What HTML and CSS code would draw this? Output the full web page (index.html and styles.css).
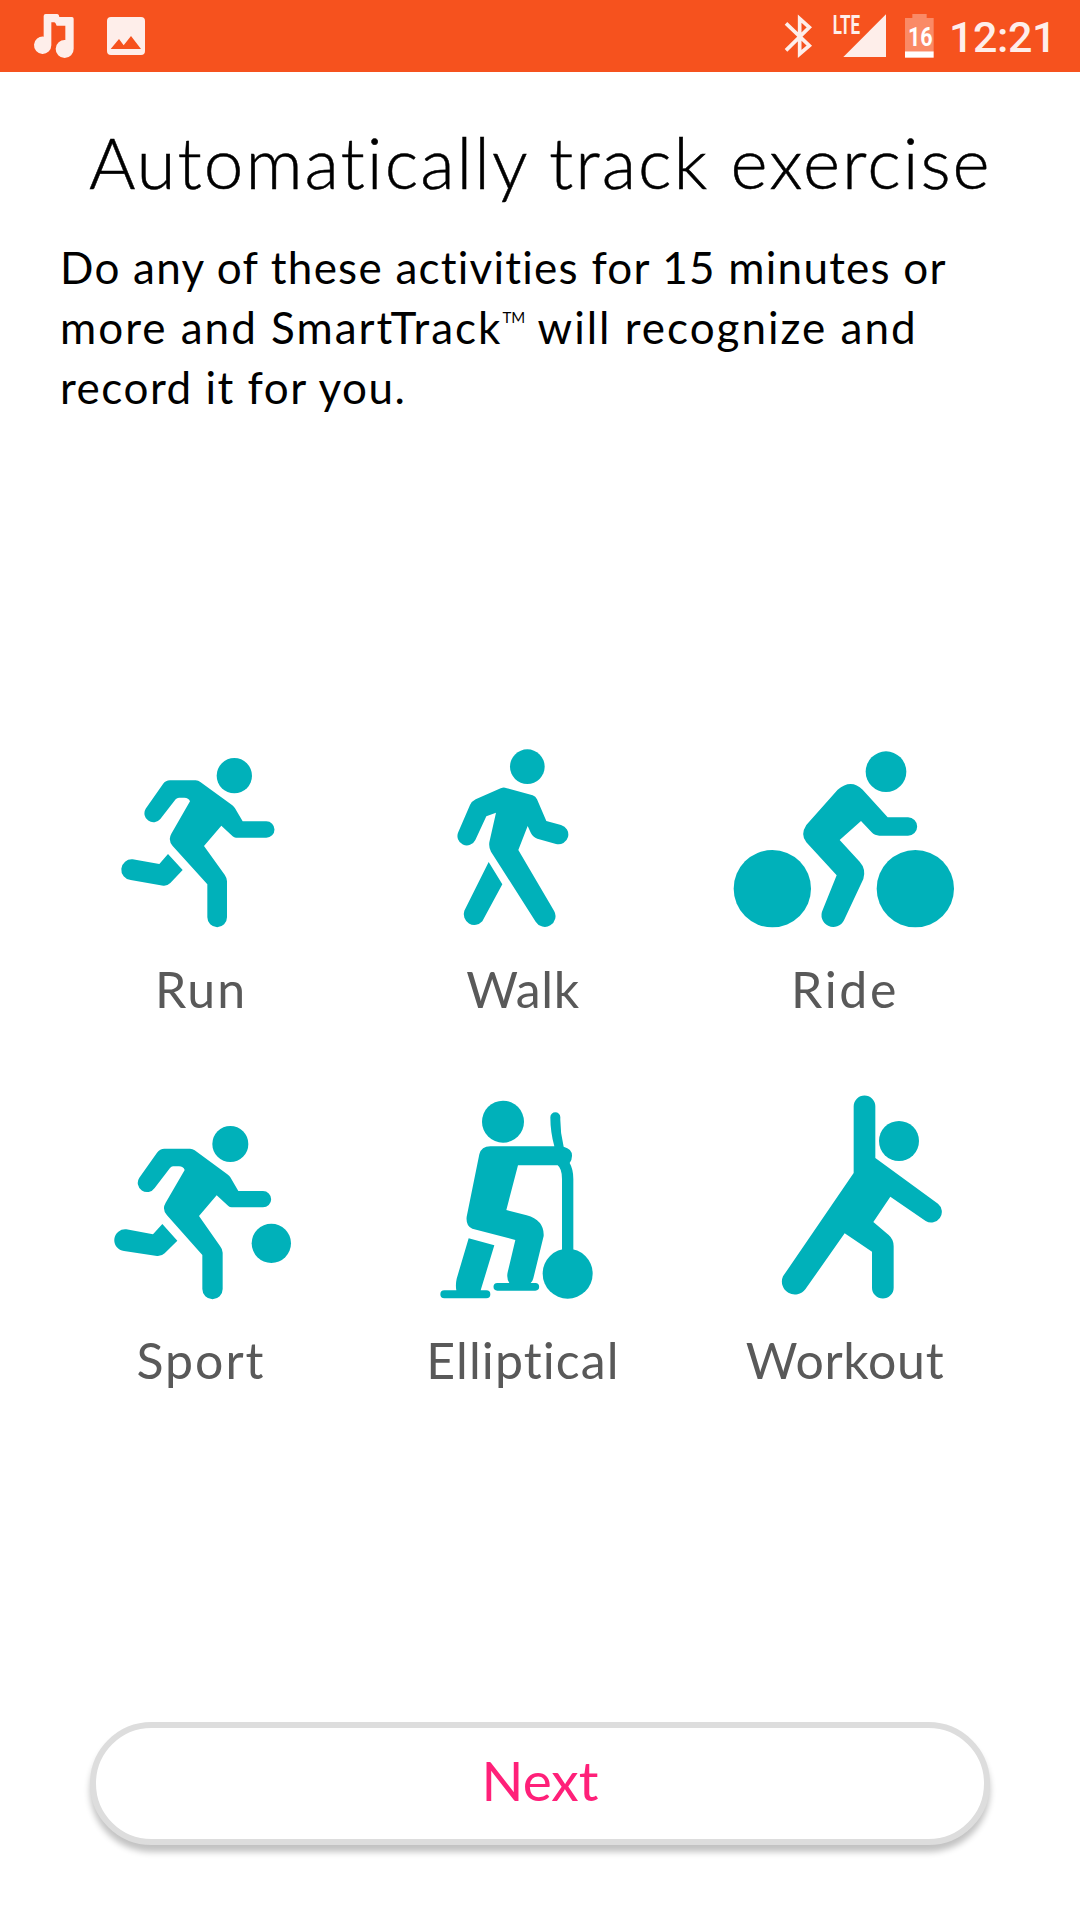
FILE: index.html
```html
<!DOCTYPE html>
<html lang="en">
<head>
<meta charset="utf-8">
<title>Automatically track exercise</title>
<link rel="stylesheet" href="styles.css">
</head>
<body>
<div class="screen">
  <header class="status-bar">
    <div class="status-left">
      <svg class="status-icon" width="200" height="72" viewBox="0 0 600 216">
        <path fill="#feeeea" d="M137 42h35q5 0 6 9h38q5 0 5 5v90a27 27 0 1 1-25-26V77h-26q-4-10-7-10h-9v69a26 26 0 1 1-23-26V48q0-6 6-6z"/>
        <path fill="#feeeea" fill-rule="evenodd" d="M333 51h90q12 0 12 12v90q0 12-12 12h-90q-12 0-12-12V63q0-12 12-12zM332 147h91l-30-39-22 28-14-19z"/>
      </svg>
    </div>
    <div class="status-right">
      <svg class="status-icon" width="180" height="72" viewBox="0 0 540 216">
        <path fill="none" stroke="#feeeea" stroke-width="11" d="M78 70l70 67-29 25V56l29 26-70 69"/>
        <text class="network" x="218" y="101" textLength="82" lengthAdjust="spacingAndGlyphs">LTE</text>
        <path fill="#feeeea" d="M378 43v128H250z"/>
        <path fill="#fa8a66" d="M457 42h43v12h21v100h-86V54h22z"/>
        <path fill="#fff" d="M435 154h86v19h-86z"/>
        <text class="battery-level" x="444" y="138" textLength="74" lengthAdjust="spacingAndGlyphs">16</text>
      </svg>
      <span class="clock">12:21</span>
    </div>
  </header>

  <main class="content">
    <h1 class="title">Automatically track exercise</h1>
    <p class="description">
      <span class="line line-1">Do any of these activities for 15 minutes or</span>
      <span class="line line-2">more and SmartTrack<span class="tm">TM</span> will recognize and</span>
      <span class="line line-3">record it for you.</span>
    </p>

    <section class="activities">
      <div class="activity">
        <svg class="pictogram" viewBox="-210 0 966 600">
          <circle cx="373" cy="107" r="53"/>
          <path d="M180 121h77q8 0 14 5l96 70q5 4 8 9l23 39h71a24.500 24.500 0 0 1 0 49h-91q-6 0-10-4l-34-32-52 61 62 86q7 10 7 20v108a29 29 0 0 1-59 0V433L188 318q-15-18-4-37l56-97q-4-11-17-11h-16q-6 0-10 5l-46 59a27 27 0 0 1-44-31l52-74q8-11 21-11z"/>
          <path d="M174 342l44 48-37 39q-9 9-21 8l-98-17a31 31 0 0 1 6-62l80 14z"/>
        </svg>
        <span class="label run">Run</span>
      </div>
      <div class="activity">
        <svg class="pictogram" viewBox="-234 0 966 600">
          <circle cx="262" cy="80" r="52"/>
          <path d="M195 143l83 23q9 3 13 12l28 65 44 12a29 29 0 0 1-15 57l-56-16q-13-4-19-16l-10-22-28 72 107 182a32 32 0 0 1-55 33L153 335q-7-12-5-28l20-89-29 11-33 71a28 28 0 0 1-51-24l35-81q5-11 17-17l75-33q7-3 13-2z"/>
          <path d="M146 366l41 67-60 111a32 32 0 0 1-54-32z"/>
        </svg>
        <span class="label walk">Walk</span>
      </div>
      <div class="activity">
        <svg class="pictogram" viewBox="-108 0 966 600">
          <circle cx="157" cy="446" r="116"/>
          <circle cx="586" cy="446" r="116"/>
          <circle cx="498" cy="95" r="61"/>
          <path d="M353 149q40-34 75 0l75 83h61a27 27 0 0 1 0 55h-86q-14 0-23-10l-32-34-64 57 60 65q20 22 11 52l-58 124a35 35 0 0 1-64-31l42-104-91-99q-19-23 0-52z"/>
        </svg>
        <span class="label ride">Ride</span>
      </div>
      <div class="activity">
        <svg class="pictogram" viewBox="-180 0 966 660">
          <circle cx="391" cy="162" r="54"/>
          <circle cx="514" cy="460" r="59"/>
          <path d="M193 176h77q8 0 14 5l98 72q6 4 9 9l24 41h74a24.500 24.500 0 0 1 0 49h-94q-6 0-10-4l-35-32-53 62 63 90q8 10 8 20v109a30 30 0 0 1-61 0V495L201 376q-16-18-4-38l57-98q-4-11-17-11h-18q-5 0-9 5l-46 60a27 27 0 0 1-46-31l53-75q9-12 22-12z"/>
          <path d="M187 402l45 50-38 38q-9 9-23 8l-99-15a32 32 0 0 1 7-65l80 15z"/>
        </svg>
        <span class="label sport">Sport</span>
      </div>
      <div class="activity">
        <svg class="pictogram" viewBox="-144 0 966 660">
          <circle cx="279" cy="95" r="63"/>
          <circle cx="473" cy="551" r="75"/>
          <path d="M241 169h192q-12-43-12-87a15 15 0 0 1 30 0q-1 45 10 88 26 7 25 28 0 11-7 21 11 19 11 48v225h-34V267q0-31-13-41H324l-35 134 61 16q53 15 51 62l-31 127q-2 9-8 14h14a11 11 0 0 1 0 23H262a11 11 0 0 1 0-23h36q-9-14-5-32l23-97-129-34q-20-7-17-36l38-187q6-24 33-24z"/>
          <path d="M176 445l77 21-41 135h17a12 12 0 0 1 0 24H103a12 12 0 0 1 0-24h36q-3-17 1-35z"/>
        </svg>
        <span class="label elliptical">Elliptical</span>
      </div>
      <div class="activity">
        <svg class="pictogram" viewBox="-138 30 966 660">
          <circle cx="507" cy="183" r="60"/>
          <path d="M371 79a32.500 32.500 0 0 1 65 0v155l188 137a32 32 0 0 1-37 52l-106-73-51 76 46 39q15 13 15 34v124a32.500 32.500 0 0 1-65 0V515l-82-55-118 168a39 39 0 0 1-67-39l212-310z"/>
        </svg>
        <span class="label workout">Workout</span>
      </div>
    </section>
  </main>

  <footer class="actions">
    <button class="next-button" type="button">Next</button>
  </footer>
</div>
</body>
</html>
```
FILE: styles.css
```css
* {
  box-sizing: border-box;
}

body {
  margin: 0;
  background: #fff;
}

.screen {
  display: flex;
  flex-direction: column;
  width: 1080px;
  height: 1920px;
  overflow: hidden;
  background: #fff;
  color: #000;
  font-family: Lato, sans-serif;
}

.status-bar {
  display: flex;
  justify-content: space-between;
  height: 72px;
  background: #f6521e;
}

.status-right {
  display: flex;
  width: 320px;
}

.status-icon {
  display: block;
}

.network {
  fill: #feeeea;
  font: 700 78px Roboto, sans-serif;
}

.battery-level {
  fill: #fff;
  font: 700 78px Roboto, sans-serif;
}

.clock {
  margin-left: 9px;
  color: #feeeea;
  font: 500 43px/74px Roboto, sans-serif;
  letter-spacing: -0.4px;
  white-space: nowrap;
}

.content {
  display: flex;
  flex: 1;
  flex-direction: column;
}

.title {
  margin: 48px 0 0 89px;
  font-size: 71px;
  font-weight: 300;
  line-height: 84px;
  letter-spacing: 2px;
  white-space: nowrap;
  -webkit-text-stroke: 0.5px #000;
}

.description {
  display: flex;
  flex-direction: column;
  margin: 33px 0 0 60px;
  font-size: 44px;
  line-height: 60px;
}

.line {
  white-space: nowrap;
}

.line-1 {
  letter-spacing: 1.24px;
}

.line-2 {
  letter-spacing: 2px;
}

.line-3 {
  letter-spacing: 1.5px;
}

.tm {
  font-size: 15px;
  letter-spacing: 0;
  line-height: 0;
  vertical-align: 21px;
}

.activities {
  display: grid;
  grid-template-columns: repeat(3, 322px);
  row-gap: 71px;
  margin: 323px 0 0 40px;
}

.activity {
  display: flex;
  flex-direction: column;
  align-items: center;
}

.pictogram {
  display: block;
  width: 322px;
  fill: #00b1ba;
}

.label {
  margin-top: 19px;
  color: #595959;
  font-size: 50px;
  line-height: 60px;
}

.run {
  letter-spacing: 2px;
}

.walk {
  letter-spacing: 0.6px;
}

.ride {
  letter-spacing: 2.6px;
}

.sport {
  margin-top: 20px;
  letter-spacing: 2px;
}

.elliptical {
  margin-top: 20px;
  letter-spacing: 1.1px;
}

.workout {
  margin-top: 20px;
  letter-spacing: 0.7px;
}

.actions {
  padding: 0 90px 75px;
}

.next-button {
  display: block;
  width: 900px;
  height: 123px;
  padding: 0 0 7px;
  border: 6px solid #ddd;
  border-radius: 62px;
  background: #fff;
  box-shadow: 0 7px 6px rgba(0, 0, 0, 0.24);
  color: #ff2079;
  font-family: inherit;
  font-size: 55px;
}
```
